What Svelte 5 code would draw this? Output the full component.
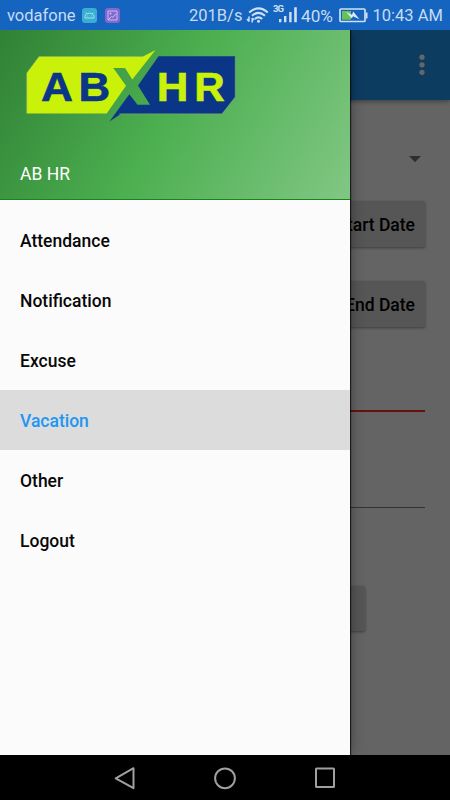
<script>
  const items = ['Attendance', 'Notification', 'Excuse', 'Vacation', 'Other', 'Logout'];
  let active = $state('Vacation');
</script>

<div class="phone">
  <header class="status">
    <span class="carrier">vodafone</span>
    <svg class="app" width="15" height="15" viewBox="0 0 15 15">
      <rect width="15" height="15" rx="3.2" fill="#38afd1" />
      <path d="M3 10V8.5Q3.2 5.5 7.5 5.2Q11.8 5.5 12 8.5V10ZM4.8 6L3.8 4.5M10.2 6L11.2 4.5M5.3 8H6.2M8.8 8H9.7" fill="none" stroke="#a5e0ef" stroke-width="1" />
    </svg>
    <svg class="app second" width="15" height="15" viewBox="0 0 15 15">
      <rect width="15" height="15" rx="3.2" fill="#8068d0" />
      <path d="M3 3H12V12H3ZM3.5 11.5L6.5 8.5L8 9.3L11 5.5M5 5H6V6H5Z" fill="none" stroke="#cbbdf0" stroke-width="1" />
    </svg>
    <span class="speed">201B/s</span>
    <svg class="wifi" width="24" height="18" viewBox="0 0 24 18" fill="none" stroke="#d0e0f3" stroke-width="2">
      <path d="M3.2 6.5Q12.5 -1.8 21.8 6.5M6 9.8Q12.5 4 19 9.8M8.8 13Q12.5 9.8 16.2 13" />
      <circle cx="12.5" cy="15.3" r="1.5" fill="#d0e0f3" stroke="none" />
      <path d="M3 10.5V15.5M1 13L3 15.5M6.2 16.5V12M6.2 12L8.2 14" stroke-width="1.5" />
    </svg>
    <svg class="signal" width="25" height="20" viewBox="0 0 25 20" fill="#d0e0f3">
      <text x="0" y="8.7" font-size="9.5" font-weight="700" textLength="11">3G</text>
      <path d="M6 16H8.4V19.3H6ZM11 13H13.4V19.3H11ZM16.2 9H18.6V19.3H16.2ZM21.2 4.3H23.8V19.3H21.2Z" />
    </svg>
    <span class="percent">40%</span>
    <svg class="battery" width="29" height="15" viewBox="0 0 29 15">
      <rect x="1" y="1" width="25" height="12.5" rx="1" fill="none" stroke="#d0e0f3" stroke-width="1.7" />
      <path d="M3 3H12V11.7H3Z" fill="#65c254" />
      <path d="M27 4.5H28.5V10.5H27" fill="#d0e0f3" />
      <path d="M7 4L13 6.8L14.2 3.5L20.5 11.2L14 8.2L12.8 10.6Z" fill="#e0eaf6" />
    </svg>
    <time>10:43 AM</time>
  </header>

  <div class="body">
    <main>
      <div class="bar">
        <svg width="6" height="22" viewBox="0 0 6 22" fill="#fff">
          <circle cx="3" cy="3.2" r="2.6" /><circle cx="3" cy="10.8" r="2.6" /><circle cx="3" cy="18.3" r="2.6" />
        </svg>
      </div>
      <div class="spinner"><svg width="12" height="7" viewBox="0 0 12 7"><path d="M0 0H12L6 6.3Z" fill="#757575" /></svg></div>
      <button class="date">Start Date</button>
      <button class="date end">End Date</button>
      <div class="field error"></div>
      <div class="field"></div>
      <button class="submit" aria-label="Submit"></button>
    </main>
    <div class="scrim"></div>

    <aside>
      <div class="head">
        <svg class="logo" width="212" height="74" viewBox="25 49 212 74">
          <path d="M26.7 73L39 56.5H143L155.5 50L132.3 79.5L125 68H113.3L126 85.7L106.7 113.4H26.7Z" fill="#c9f10a" />
          <path d="M158.5 56.3H235.2V97L222 113.8H121L109.5 121.5L129.3 94.3L137.5 104.7H150L138 85.5Z" fill="#0b3586" />
          <path d="M26.7 113.4V73L39 56.5H142M119 113.9H222L235.2 97V56.5" fill="none" stroke="#91a983" stroke-width=".5" />
          <g font-family="Liberation Sans, sans-serif" font-size="41" font-weight="700" stroke-width=".6">
            <g fill="#0b3586" stroke="#0b3586">
              <text transform="translate(41 101.3) scale(1.08 1)">A</text>
              <text transform="translate(78.5 101.3) scale(1.07 1)">B</text>
            </g>
            <g fill="#c9f10a" stroke="#c9f10a">
              <text transform="translate(156.8 101.3) scale(1.07 1)">H</text>
              <text transform="translate(194.3 101.3) scale(1.03 1)">R</text>
            </g>
          </g>
        </svg>
        <div class="name">AB HR</div>
      </div>
      <nav>
        {#each items as item}
          <button class:active={item === active} onclick={() => (active = item)}>{item}</button>
        {/each}
      </nav>
    </aside>
  </div>

  <footer>
    <svg width="22" height="24" viewBox="0 0 22 24"><path d="M2.7 12.3L20.5 2.2V22.2Z" /></svg>
    <svg width="24" height="24" viewBox="0 0 24 24"><circle cx="12" cy="12.3" r="9.9" /></svg>
    <svg width="22" height="24" viewBox="0 0 22 24"><rect x="1" y="2.5" width="18" height="18.4" rx=".5" /></svg>
  </footer>
</div>

<style>
  .phone {
    width: 450px;
    height: 800px;
    display: flex;
    flex-direction: column;
    overflow: hidden;
    font-family: Roboto, sans-serif;
    font-size: 17.5px;
  }
  svg { display: block; flex: none; }
  button { border: 0; font: inherit; text-align: left; }
  .status {
    height: 30px;
    flex: none;
    box-sizing: border-box;
    display: flex;
    align-items: center;
    padding: 1px 0 0 7px;
    background: #1565c0;
    color: #c8dbf2;
    font-size: 16.5px;
    white-space: nowrap;
    line-height: 30px;
  }
  .status span, .status time { flex: none; }
  .carrier { width: 75px; }
  .app.second { margin-left: 8px; }
  .speed { margin-left: 69px; width: 57px; }
  .wifi { margin-top: -1px; }
  .signal { margin: -5px 0 0 3px; }
  .percent { margin-left: 3px; width: 38px; font-size: 17.2px; }
  .battery { margin-top: -1px; }
  time { margin-left: 4.5px; }

  .body { height: 725px; flex: none; position: relative; overflow: hidden; }
  main {
    height: 100%;
    display: flex;
    flex-direction: column;
    align-items: flex-end;
    background: #fafafa;
  }
  .bar {
    width: 100%;
    height: 70px;
    box-sizing: border-box;
    display: flex;
    align-items: center;
    justify-content: flex-end;
    padding-right: 25px;
    background: #2196f3;
    box-shadow: 0 1px 5px rgba(0, 0, 0, 0.45);
  }
  .spinner { height: 45px; padding: 56px 29px 0 0; }
  .date {
    width: 200px;
    height: 46px;
    margin-right: 25px;
    padding: 2px 10px 0 0;
    border-radius: 2px;
    background: #d6d7d7;
    box-shadow: 0 1px 3px rgba(0, 0, 0, 0.4);
    color: #000;
    font-weight: 500;
    text-align: right;
  }
  .date.end { margin-top: 34px; }
  .field { width: 375px; height: 1.5px; margin: 94.5px 25px 0 0; background: #808080; }
  .field.error { height: 2.5px; margin-top: 82.5px; background: #ff2f20; }
  .submit {
    width: 280px;
    height: 45px;
    margin: 78px 85px 0 0;
    border-radius: 2px;
    background: #d6d7d7;
    box-shadow: 0 1px 3px rgba(0, 0, 0, 0.4);
  }
  .scrim { position: absolute; inset: 0; background: rgba(0, 0, 0, 0.6); }

  aside {
    position: absolute;
    inset: 0 100px 0 0;
    background: #fbfbfb;
    box-shadow: 1px 0 1px rgba(0, 0, 0, 0.65), 0 0 13px rgba(0, 0, 0, 0.4);
  }
  .head {
    height: 170px;
    box-sizing: border-box;
    padding: 19px 20px 0 25px;
    border-bottom: 1px solid #17851c;
    background: linear-gradient(119.7deg, #2e7d32, #4caf50 50%, #81c784) 0 -30px / 350px 200px no-repeat;
  }
  .name { margin: 40px 0 0 -5px; line-height: 22px; color: #fff; }
  nav { display: flex; flex-direction: column; padding-top: 10px; }
  nav button {
    height: 60px;
    padding: 1px 20px 0;
    background: none;
    color: #080808;
    font-weight: 500;
  }
  nav button.active { background: #dcdcdc; color: #2196f3; }

  footer {
    height: 45px;
    flex: none;
    display: flex;
    align-items: center;
    justify-content: center;
    gap: 78px;
    background: #000;
  }
  footer svg { fill: none; stroke: #a0a0a0; stroke-width: 2; stroke-linejoin: round; }
</style>
